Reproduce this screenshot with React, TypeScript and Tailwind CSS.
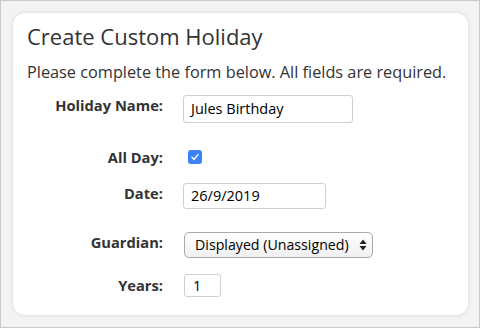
import React from "react";

export default function App() {
  return (
    <div
      className="w-[480px] h-[328px] bg-[#f3f3f3] border border-[#c9c9c9] box-border pt-[12px] pl-[12px] pr-[12px]"
      style={{ fontFamily: '"Open Sans", "Liberation Sans", sans-serif' }}
    >
      <div className="w-[455px] h-[302px] bg-white rounded-[12px] shadow-[0_0_4px_rgba(0,0,0,0.12)] pl-[14px] pt-[8px] text-[#333]">
        <h1 className="text-[22px] leading-[30px] font-normal">Create Custom Holiday</h1>
        <p className="text-[16.3px] leading-[22px] mt-[10px]">
          Please complete the form below. All fields are required.
        </p>

        <div className="flex items-start mt-[12px]">
          <div className="w-[136px] text-right text-[14.7px] leading-5 font-bold">Holiday Name:</div>
          <div className="ml-[20px] w-[170px] h-[28px] border border-[#d0d0d0] rounded-[3px] text-[14.5px] leading-[26px] pl-[7px] text-black">
            Jules Birthday
          </div>
        </div>

        <div className="flex items-center mt-[24px] h-5">
          <div className="w-[136px] text-right text-[14.7px] leading-5 font-bold">All Day:</div>
          <div className="ml-[25px] w-[14px] h-[14px] rounded-[3px] bg-[#3b82f6] flex items-center justify-center">
            <svg width="10" height="10" viewBox="0 0 10 10">
              <path d="M2 5.3 L4.1 7.4 L8 2.6" stroke="white" strokeWidth="1.5" fill="none" strokeLinecap="round" strokeLinejoin="round" />
            </svg>
          </div>
        </div>

        <div className="flex items-start mt-[16px]">
          <div className="w-[136px] text-right text-[14.7px] leading-5 font-bold">Date:</div>
          <div className="ml-[20px] w-[143px] h-[26px] border border-[#d0d0d0] rounded-[3px] text-[14.5px] leading-[24px] pl-[7px] text-black">
            26/9/2019
          </div>
        </div>

        <div className="flex items-start mt-[23px]">
          <div className="w-[136px] text-right text-[14.7px] leading-5 font-bold">Guardian:</div>
          <div className="ml-[21px] w-[189px] h-[26px] border border-[#a9a9a9] rounded-[5px] bg-gradient-to-b from-white to-[#f0f0f0] text-[14.2px] leading-[24px] pl-[10px] pr-[5px] text-black flex items-center justify-between">
            <span>Displayed (Unassigned)</span>
            <svg width="8" height="12" viewBox="0 0 8 12">
              <path d="M0.5 5 L4 0.6 L7.5 5 Z" fill="#222" />
              <path d="M0.5 7 L4 11.4 L7.5 7 Z" fill="#222" />
            </svg>
          </div>
        </div>

        <div className="flex items-start mt-[16px]">
          <div className="w-[136px] text-right text-[14.7px] leading-5 font-bold pt-[1px]">Years:</div>
          <div className="ml-[21px] w-[37px] h-[23px] border border-[#d0d0d0] rounded-[3px] text-[14.5px] leading-[21px] pl-[8px] text-black">
            1
          </div>
        </div>
      </div>
    </div>
  );
}
